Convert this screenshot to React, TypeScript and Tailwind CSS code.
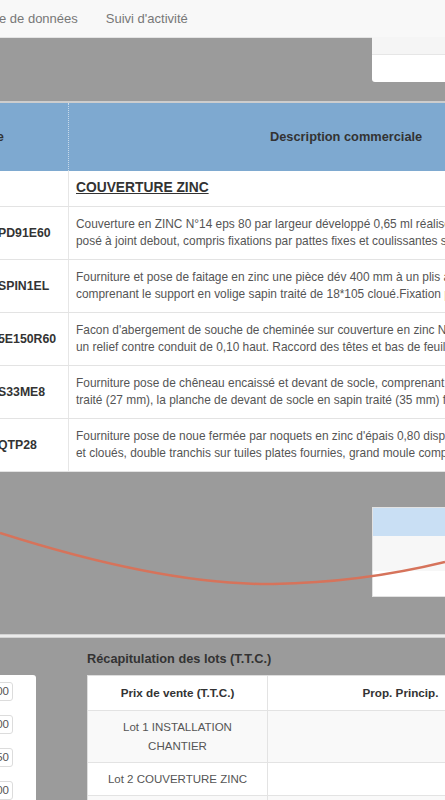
const ROWS = [
  {
    code: 'PD91E60',
    l1: 'Couverture en ZINC N°14 eps 80 par largeur développé 0,65 ml réalisé en bandes',
    l2: 'posé à joint debout, compris fixations par pattes fixes et coulissantes sur voliges',
  },
  {
    code: 'SPIN1EL',
    l1: 'Fourniture et pose de faitage en zinc une pièce dév 400 mm à un plis avec rabat',
    l2: 'comprenant le support en volige sapin traité de 18*105 cloué.Fixation par pattes',
  },
  {
    code: '5E150R60',
    l1: "Facon d'abergement de souche de cheminée sur couverture en zinc N°14 avec bande",
    l2: 'un relief contre conduit de 0,10 haut. Raccord des têtes et bas de feuilles compris',
  },
  {
    code: 'S33ME8',
    l1: 'Fourniture pose de chêneau encaissé et devant de socle, comprenant le fond en sapin',
    l2: 'traité (27 mm), la planche de devant de socle en sapin traité (35 mm) fixée sur',
  },
  {
    code: 'QTP28',
    l1: "Fourniture pose de noue fermée par noquets en zinc d'épais 0,80 disposés, pliés",
    l2: 'et cloués, double tranchis sur tuiles plates fournies, grand moule compris et façon',
  },
];

const LOTS = [
  { label: ['Lot 1 INSTALLATION', 'CHANTIER'], h: 'h-[52px]', bg: 'bg-[#f9f9f9]' },
  { label: ['Lot 2 COUVERTURE ZINC'], h: 'h-[33px]', bg: 'bg-white' },
  { label: ['Lot 3 ZINGUERIE'], h: 'h-[33px]', bg: 'bg-[#f9f9f9]' },
];

export default function App() {
  return (
    <div className="w-full h-[800px] overflow-hidden bg-[#9b9b9b] font-['Liberation_Sans',Arial,sans-serif]">
      {/* top nav */}
      <div className="h-[38px] bg-[#f8f8f8] border-b border-[#e4e4e4] flex items-center text-[13px] text-[#777] whitespace-nowrap">
        <span className="-ml-[1px]">e de données</span>
        <span className="ml-[28px]">Suivi d'activité</span>
      </div>

      <div className="h-[63px] flex">
        <div className="ml-auto -mt-[1px] w-[73px] h-[45px] bg-white rounded-bl-[3px] overflow-hidden">
          <div className="h-[18px] bg-[#f5f5f5] border-b border-[#e6e6e6]"></div>
        </div>
      </div>

      {/* article table */}
      <div className="border-t-2 border-[#cdcdcd] bg-white">
        <div className="flex -ml-[122px] w-[780px]">
          <div className="w-[191px] shrink-0 h-[68px] bg-[#7ea9d0] border-r border-dotted border-[#c9daea] flex items-center justify-center text-[12.8px] font-bold text-[#333]">
            Référence
          </div>
          <div className="flex-1 h-[68px] bg-[#7ea9d0] flex items-center pl-[201px] text-[12.8px] font-bold text-[#333]">
            Description commerciale
          </div>
        </div>
        <div className="flex -ml-[122px] w-[780px] h-[36px] border-b border-[#e3e3e3]">
          <div className="w-[191px] shrink-0 border-r border-[#e6e6e6]"></div>
          <div className="flex-1 flex items-center pl-[7px] text-[13.8px] font-bold underline text-[#333]">
            COUVERTURE ZINC
          </div>
        </div>
        {ROWS.map(r => (
          <div key={r.code} className="flex -ml-[122px] w-[780px] h-[53px] border-b border-[#e3e3e3]">
            <div className="w-[191px] shrink-0 border-r border-[#e6e6e6] flex items-center pl-[120px] text-[12.3px] font-bold text-[#333]">
              {r.code}
            </div>
            <div className="flex-1 flex flex-col justify-center pl-[7px] text-[11.9px] leading-[17px] text-[#555] whitespace-nowrap overflow-hidden">
              <span>{r.l1}</span>
              <span>{r.l2}</span>
            </div>
          </div>
        ))}
      </div>

      {/* backdrop with curve */}
      <div className="relative h-[162px] pt-[35px]">
        <div className="ml-auto w-[73px] h-[90px] bg-white border-l border-y border-[#e2e2e2] overflow-hidden">
          <div className="h-[28px] bg-[#c9dff4]"></div>
          <div className="h-[35px] bg-[#f7f7f7]"></div>
        </div>
        <svg className="absolute inset-0" width="445" height="162" viewBox="0 0 445 162">
          <path
            d="M0 61 C 110 96, 200 113, 273 112 C 340 111, 400 101, 445 90"
            fill="none"
            stroke="#d6735b"
            strokeWidth="2.5"
          />
        </svg>
      </div>
      <div className="h-[4px] bg-[#ebebeb] border-y border-[#d3d3d3]"></div>

      {/* recap */}
      <div className="pt-[13px]">
        <div className="pl-[87px] text-[12.75px] leading-[15px] font-bold text-[#333]">Récapitulation des lots (T.T.C.)</div>
        <div className="flex mt-[9px]">
          <div className="w-[36px] h-[200px] shrink-0 bg-white rounded-tr-[3px] pt-[7px] flex flex-col gap-[14px] overflow-hidden">
            {['0,00', '0,00', '0,50', '0,00'].map((v, i) => (
              <div key={i} className="-ml-[27px] w-[40px] h-[19px] shrink-0 border border-[#dcdcdc] rounded-[3px] bg-white flex items-center justify-end pr-[3px] text-[11.5px] text-[#555]">
                {v}
              </div>
            ))}
          </div>
          <div className="ml-[51px] w-[446px] shrink-0 bg-white border-l border-t border-[#dedede] text-[11.5px] text-[#555]">
            <div className="flex h-[35px] border-b border-[#e3e3e3] font-bold text-[#333] text-[11.7px]">
              <div className="w-[180px] border-r border-[#e3e3e3] flex items-center justify-center">Prix de vente (T.T.C.)</div>
              <div className="flex-1 flex items-center justify-center">Prop. Princip.</div>
            </div>
            {LOTS.map((l, i) => (
              <div key={i} className={`flex border-b border-[#e3e3e3] ${l.h} ${l.bg}`}>
                <div className="w-[180px] border-r border-[#e3e3e3] flex flex-col items-center justify-center leading-[19px]">
                  {l.label.map(t => (
                    <span key={t}>{t}</span>
                  ))}
                </div>
                <div className="flex-1"></div>
              </div>
            ))}
          </div>
        </div>
      </div>
    </div>
  );
}
